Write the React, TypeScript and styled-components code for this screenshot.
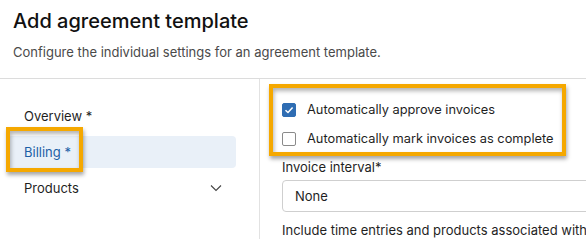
import React from 'react';
import styled, { createGlobalStyle } from 'styled-components';

const GlobalStyle = createGlobalStyle`
  body {
    margin: 0;
    font-family: Inter, "Noto Sans", sans-serif;
    color: #1f1f1f;
    background: #fff;
  }
`;

const Page = styled.div`
  width: 586px;
  height: 239px;
  overflow: hidden;
`;

const Header = styled.header`
  height: 79px;
  box-sizing: border-box;
  padding: 8px 13px 0;
  border-bottom: 1px solid #dcdcdc;
`;

const Title = styled.h1`
  margin: 0;
  font-size: 20px;
  line-height: 26px;
  font-weight: 500;
  color: #111;
`;

const Subtitle = styled.p`
  margin: 9px 0 0;
  font-size: 13px;
  line-height: 18px;
  color: #4a4a4a;
`;

const Body = styled.div`
  display: flex;
  height: 160px;
`;

const Sidebar = styled.nav`
  width: 260px;
  flex-shrink: 0;
  box-sizing: border-box;
  border-right: 1px solid #e2e2e2;
  padding: 21px 23px 0 8px;
  display: flex;
  flex-direction: column;
  gap: 4px;
`;

const NavItem = styled.div<{ active?: boolean }>`
  position: relative;
  height: 32px;
  display: flex;
  align-items: center;
  justify-content: space-between;
  padding: 0 14px 0 16px;
  border-radius: 4px;
  font-size: 13px;
  background: ${p => (p.active ? '#e9f0f8' : 'transparent')};
  color: ${p => (p.active ? '#1d5fa6' : '#1f1f1f')};
`;

const Highlight = styled.div<{ w: number; h: number; l: number; t: number }>`
  position: absolute;
  left: ${p => p.l}px;
  top: ${p => p.t}px;
  width: ${p => p.w}px;
  height: ${p => p.h}px;
  box-sizing: border-box;
  border: 4px solid #f5a800;
  pointer-events: none;
  box-shadow: 1px 3px 4px rgba(0, 0, 0, 0.35), inset 1px 3px 4px rgba(0, 0, 0, 0.3);
`;

const Content = styled.section`
  flex: 1;
  padding: 16px 0 0 22px;
  display: flex;
  flex-direction: column;
  min-width: 0;
`;

const CheckGroup = styled.div`
  position: relative;
  display: flex;
  flex-direction: column;
`;

const CheckRow = styled.label`
  height: 29px;
  display: flex;
  align-items: center;
  gap: 11px;
  font-size: 12.8px;
  color: #1f1f1f;
`;

const Box = styled.span<{ checked?: boolean }>`
  width: 14px;
  height: 14px;
  box-sizing: border-box;
  border-radius: 2px;
  border: 1px solid ${p => (p.checked ? '#2f6db3' : '#8a8a8a')};
  background: ${p => (p.checked ? '#2f6db3' : '#fff')};
  display: flex;
  align-items: center;
  justify-content: center;
`;

const FieldLabel = styled.div`
  margin-top: 5px;
  font-size: 13px;
  line-height: 18px;
  color: #1f1f1f;
`;

const Select = styled.div`
  margin-top: 4px;
  height: 35px;
  width: 340px;
  box-sizing: border-box;
  border: 1px solid #cfcfcf;
  border-radius: 4px;
  padding-left: 12px;
  display: flex;
  align-items: center;
  font-size: 13px;
`;

const Help = styled.div`
  margin-top: 9px;
  font-size: 13px;
  line-height: 18px;
  white-space: nowrap;
`;

const Check = () => (
  <svg width="10" height="10" viewBox="0 0 10 10">
    <path d="M1.5 5.2 L4 7.5 L8.6 2.5" fill="none" stroke="#fff" strokeWidth="1.5" />
  </svg>
);

const Chevron = () => (
  <svg width="12" height="8" viewBox="0 0 12 8">
    <path d="M1 1.5 L6 6.5 L11 1.5" fill="none" stroke="#444" strokeWidth="1.1" />
  </svg>
);

export default function App() {
  return (
    <Page>
      <GlobalStyle />
      <Header>
        <Title>Add agreement template</Title>
        <Subtitle>Configure the individual settings for an agreement template.</Subtitle>
      </Header>
      <Body>
        <Sidebar>
          <NavItem>Overview *</NavItem>
          <NavItem active>
            Billing *
            <Highlight l={-2} t={-9} w={77} h={45} />
          </NavItem>
          <NavItem>
            Products
            <Chevron />
          </NavItem>
        </Sidebar>
        <Content>
          <CheckGroup>
            <CheckRow>
              <Box checked>
                <Check />
              </Box>
              Automatically approve invoices
            </CheckRow>
            <CheckRow>
              <Box />
              Automatically mark invoices as complete
            </CheckRow>
            <Highlight l={-13} t={-11} w={297} h={72} />
          </CheckGroup>
          <FieldLabel>Invoice interval*</FieldLabel>
          <Select>None</Select>
          <Help>Include time entries and products associated with this agreement</Help>
        </Content>
      </Body>
    </Page>
  );
}
